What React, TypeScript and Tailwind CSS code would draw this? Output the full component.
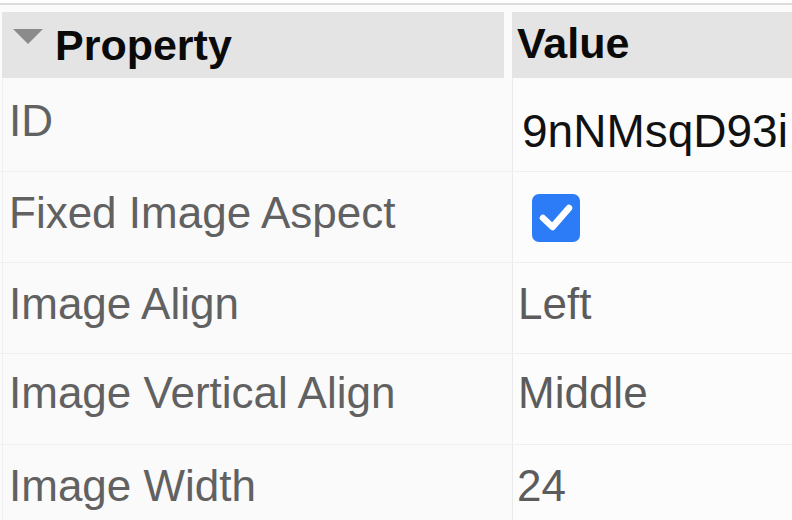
import React from "react";

const font = { fontFamily: '"Liberation Sans", Arial, sans-serif' };

function Check() {
  return (
    <div className="w-[48px] h-[48px] rounded-[7px] bg-[#2b7cf6] flex items-center justify-center">
      <svg width="48" height="48" viewBox="0 0 48 48">
        <path d="M11 24 L20.5 33 L37 14" fill="none" stroke="#fff" strokeWidth="6.5" strokeLinecap="round" strokeLinejoin="round" />
      </svg>
    </div>
  );
}

const rows: { label: string; h: string; pt: string; value: React.ReactNode }[] = [
  {
    label: "ID",
    h: "h-[94px]",
    pt: "pt-[18px]",
    value: (
      <div className="pt-[29px] pl-[9px] text-[46px] leading-[49px] text-[#111] whitespace-nowrap overflow-hidden">
        9nNMsqD93i
      </div>
    ),
  },
  {
    label: "Fixed Image Aspect",
    h: "h-[91px]",
    pt: "pt-[16px]",
    value: (
      <div className="pt-[22px] pl-[19px]">
        <Check />
      </div>
    ),
  },
  {
    label: "Image Align",
    h: "h-[91px]",
    pt: "pt-[16px]",
    value: <div className="pt-[16px] pl-[5px] text-[44px] leading-[49px] text-[#5c5c5c]">Left</div>,
  },
  {
    label: "Image Vertical Align",
    h: "h-[91px]",
    pt: "pt-[14px]",
    value: <div className="pt-[14px] pl-[5px] text-[44px] leading-[49px] text-[#5c5c5c]">Middle</div>,
  },
  {
    label: "Image Width",
    h: "h-[91px]",
    pt: "pt-[16px]",
    value: <div className="pt-[16px] pl-[4px] text-[44px] leading-[49px] text-[#5c5c5c]">24</div>,
  },
];

export default function App() {
  return (
    <div className="w-[792px] h-[520px] overflow-hidden bg-[#fbfbfb]" style={font}>
      <div className="h-[3px] bg-white" />
      <div className="h-[2px] bg-[#dcdcdc]" />
      <div className="h-[7px] bg-[#fbfbfb]" />
      <div className="flex h-[66px]">
        <div className="ml-[2px] w-[502px] bg-[#e4e4e4] flex items-center">
          <svg width="30" height="16" viewBox="0 0 30 16" className="ml-[11px] -mt-[16px]">
            <path d="M0 0 L30 0 L15 15 Z" fill="#8b8b8b" />
          </svg>
          <span className="ml-[12px] text-[43px] leading-[49px] font-bold text-[#0a0a0a]">Property</span>
        </div>
        <div className="ml-[8px] flex-1 bg-[#e4e4e4] flex items-center pl-[5px]">
          <span className="text-[43px] leading-[49px] font-bold text-[#0a0a0a] -mt-[4px]">Value</span>
        </div>
      </div>
      <div className="flex flex-col">
        {rows.map((r) => (
          <div key={r.label} className={`grid grid-cols-[512px_1fr] ${r.h} border-b border-[#efefef]`}>
            <div className={`${r.pt} pl-[6px] border-l border-[#f0f0f0] ml-[2px] text-[44px] leading-[49px] text-[#616161] whitespace-nowrap bg-[#fafafa]`}>
              {r.label}
            </div>
            <div className="border-l border-[#ebebeb] bg-[#fcfcfc] overflow-hidden">{r.value}</div>
          </div>
        ))}
      </div>
    </div>
  );
}
